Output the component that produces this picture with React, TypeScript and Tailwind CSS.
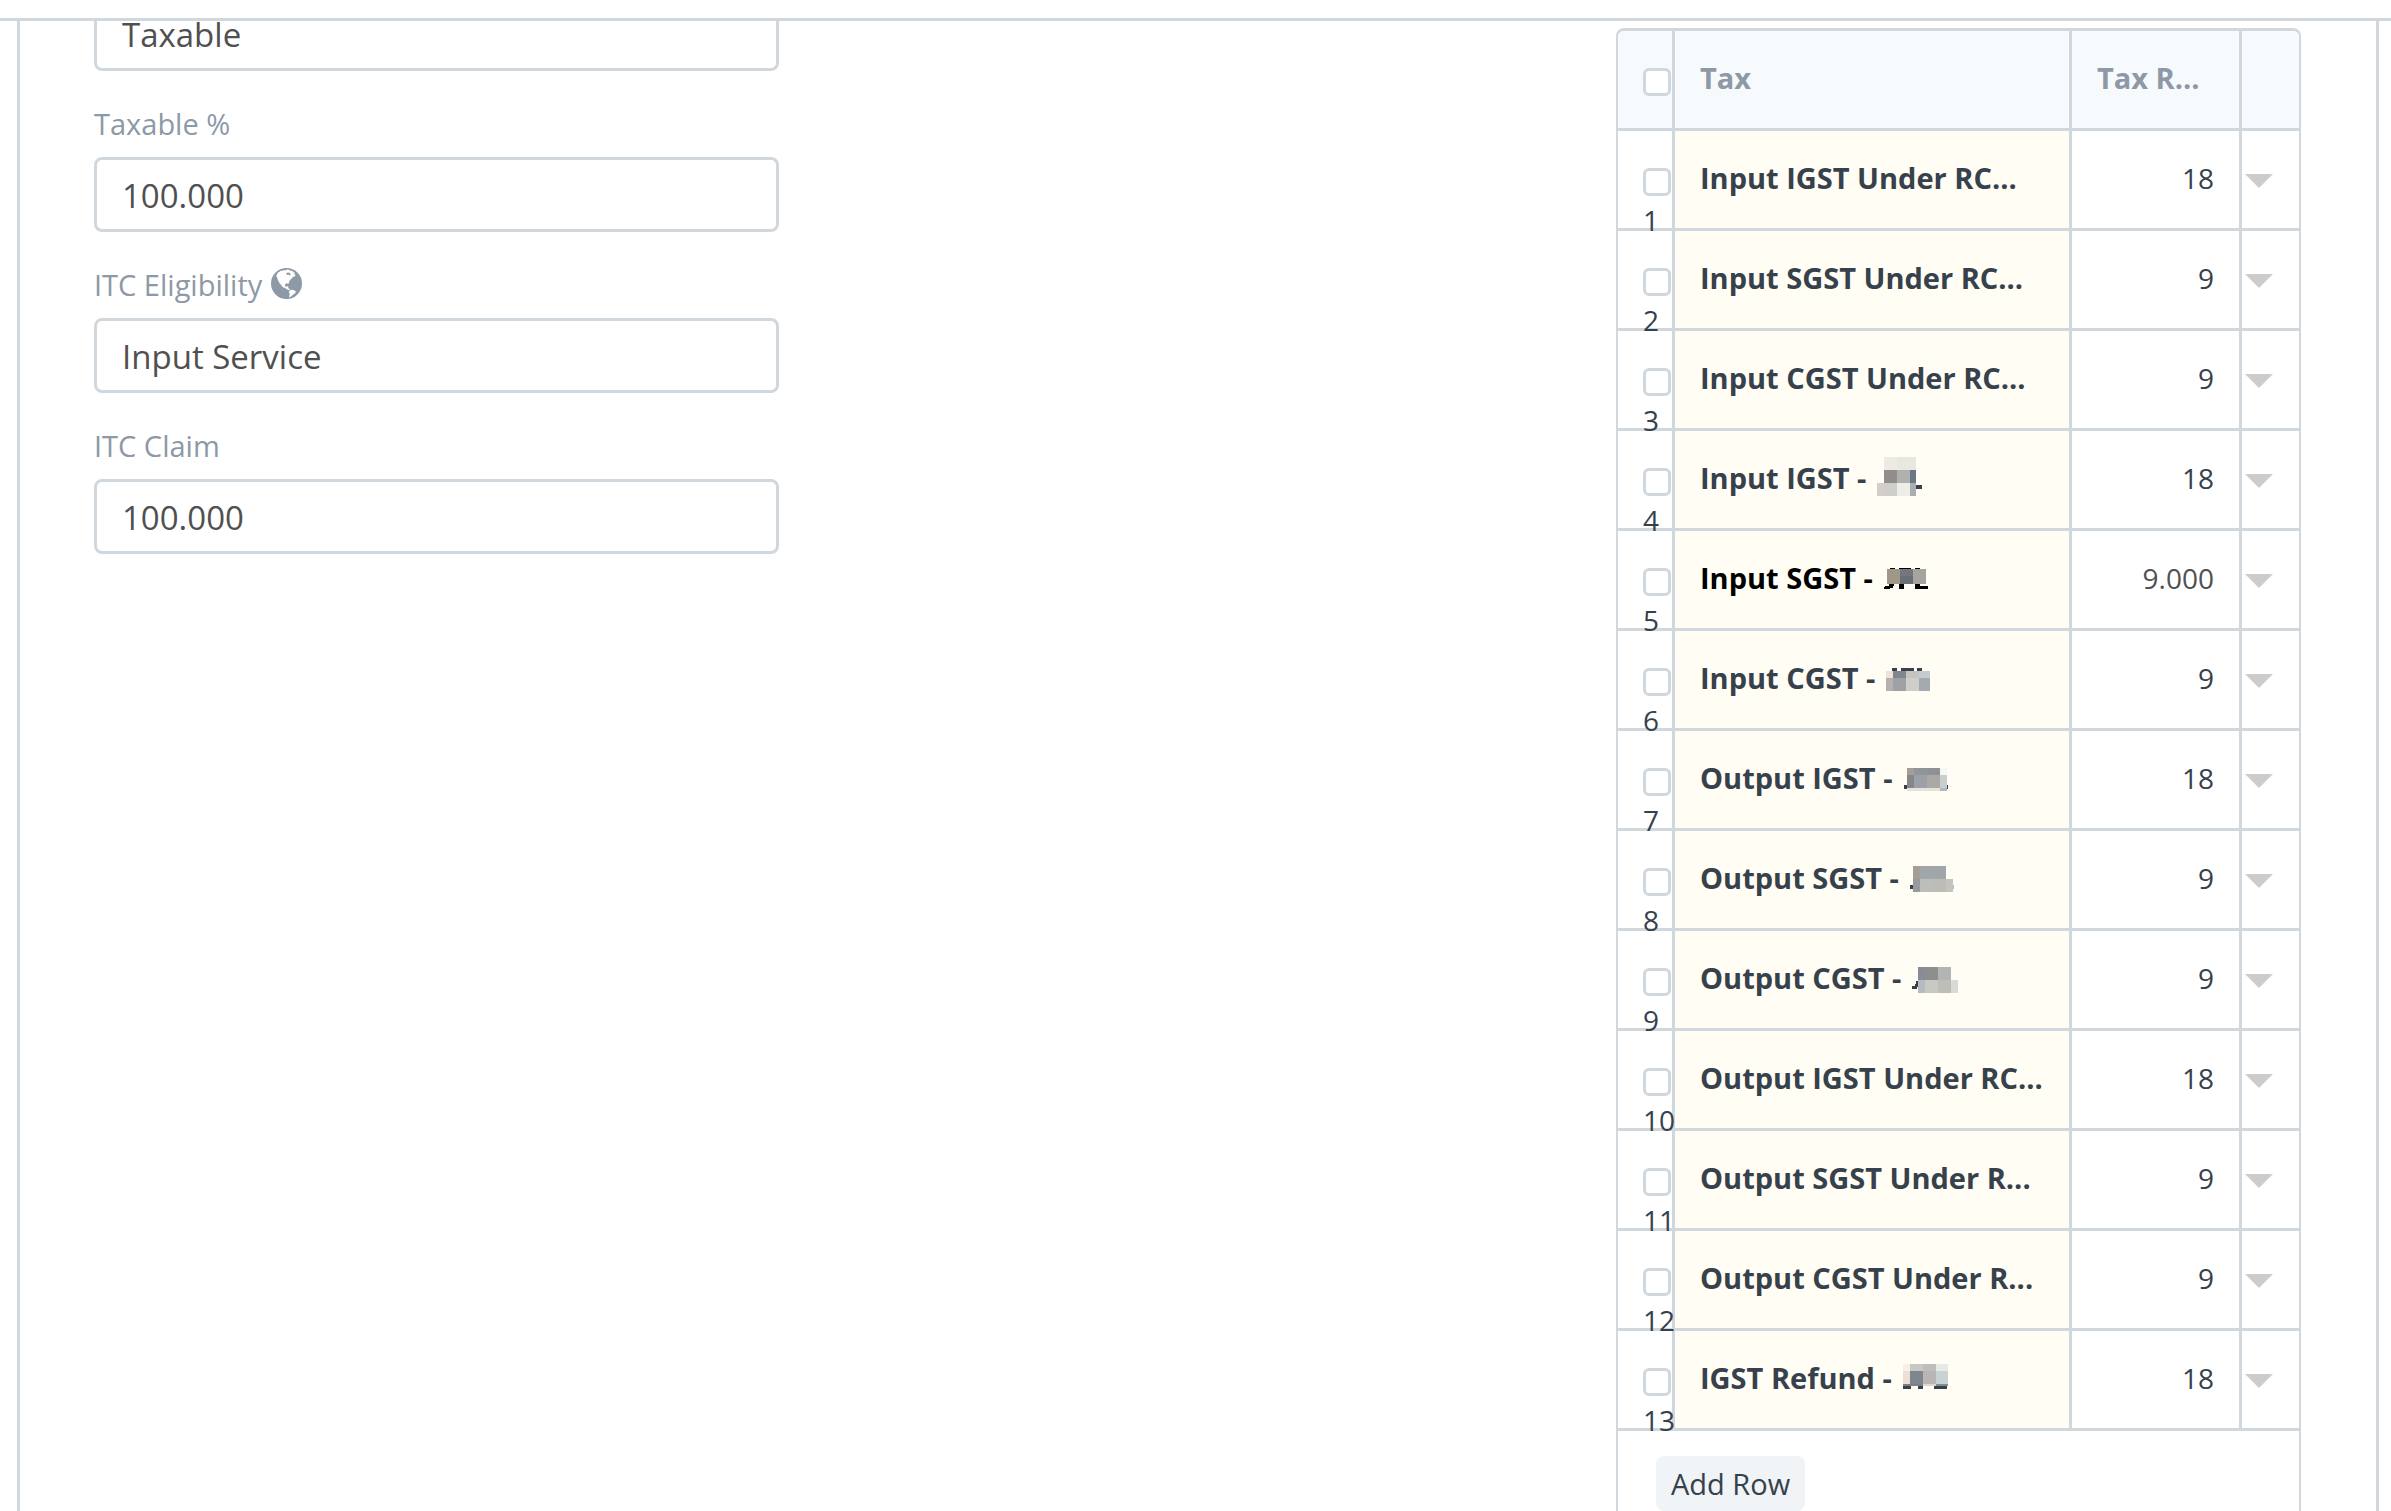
import { useId } from "react";

type Block = [x: number, y: number, w: number, h: number, fill: string];

type TaxRow = {
  tax: string;
  rate: string;
  mask?: Block[];
  editing?: boolean;
};

const INK = "#36414c";

const ROWS: TaxRow[] = [
  { tax: "Input IGST Under RC...", rate: "18" },
  { tax: "Input SGST Under RC...", rate: "9" },
  { tax: "Input CGST Under RC...", rate: "9" },
  {
    tax: "Input IGST -",
    rate: "18",
    mask: [
      [7, 0, 13, 13, "#eeebe5"],
      [20, 0, 13, 13, "#e8e7e0"],
      [33, 0, 6, 13, "#e7e8e2"],
      [7, 13, 13, 13, "#928d8d"],
      [20, 13, 13, 13, "#afb1b1"],
      [33, 13, 6, 13, "#6a7788"],
      [0, 26, 7, 13, "#d3cec9"],
      [7, 26, 13, 13, "#cfcfc9"],
      [20, 26, 13, 13, "#eeeee8"],
      [33, 26, 6, 13, "#abaeaf"],
      [39, 28, 6, 4, INK],
    ],
  },
  {
    tax: "Input SGST -",
    rate: "9.000",
    editing: true,
    mask: [
      [6, 11, 5, 1, "#000"],
      [15, 11, 12, 1, "#000"],
      [31, 11, 5, 1, "#000"],
      [3, 12, 13, 15, "#a09887"],
      [16, 12, 13, 7, "#74777d"],
      [16, 19, 13, 8, "#6a6f74"],
      [29, 12, 13, 15, "#a5a49f"],
      [5, 27, 5, 2, "#000"],
      [1, 29, 8, 2, "#000"],
      [0, 30, 6, 2, "#000"],
      [15, 27, 5, 5, "#000"],
      [31, 27, 5, 5, "#000"],
      [36, 29, 8, 3, "#000"],
    ],
  },
  {
    tax: "Input CGST -",
    rate: "9",
    mask: [
      [6, 11, 5, 3, INK],
      [15, 11, 13, 3, INK],
      [31, 11, 5, 3, INK],
      [0, 14, 7, 7, "#efe2d6"],
      [7, 14, 13, 7, "#7f868d"],
      [20, 14, 13, 7, "#c5c4bf"],
      [33, 14, 11, 7, "#c6cccd"],
      [0, 21, 7, 13, "#b8b0ae"],
      [7, 21, 13, 13, "#9fa2a5"],
      [20, 21, 13, 13, "#cfcec9"],
      [33, 21, 11, 13, "#a4abae"],
    ],
  },
  {
    tax: "Output IGST -",
    rate: "18",
    mask: [
      [0, 28, 3, 4, INK],
      [3, 11, 7, 7, "#a59e97"],
      [10, 11, 13, 7, "#8f959a"],
      [23, 11, 13, 7, "#8f9194"],
      [36, 11, 7, 7, "#f3faf5"],
      [3, 18, 7, 13, "#878787"],
      [10, 18, 13, 13, "#9ba1a7"],
      [23, 18, 13, 13, "#aba8a6"],
      [36, 18, 7, 13, "#c9cfcc"],
      [3, 31, 33, 3, "#e6e3df"],
      [36, 31, 7, 3, "#b5b7b4"],
      [43, 28, 1, 4, "#2a3a80"],
    ],
  },
  {
    tax: "Output SGST -",
    rate: "9",
    mask: [
      [0, 28, 3, 4, INK],
      [3, 9, 7, 13, "#a49d96"],
      [10, 9, 26, 13, "#a1a6a9"],
      [3, 22, 7, 13, "#989a9d"],
      [10, 22, 13, 13, "#bcbebc"],
      [23, 22, 13, 13, "#bdbdb8"],
      [36, 22, 7, 13, "#c4c3c0"],
      [43, 28, 1, 4, "#8fc7f0"],
    ],
  },
  {
    tax: "Output CGST -",
    rate: "9",
    mask: [
      [4, 24, 2, 3, INK],
      [3, 27, 3, 3, INK],
      [0, 29, 5, 3, INK],
      [6, 10, 7, 13, "#888c96"],
      [13, 10, 13, 13, "#8d8f8e"],
      [26, 10, 13, 13, "#b1b5b6"],
      [6, 23, 7, 13, "#b6bbc1"],
      [13, 23, 13, 13, "#c8c9c4"],
      [26, 23, 13, 13, "#bebeb9"],
      [39, 23, 7, 13, "#d9dad6"],
    ],
  },
  { tax: "Output IGST Under RC...", rate: "18" },
  { tax: "Output SGST Under R...", rate: "9" },
  { tax: "Output CGST Under R...", rate: "9" },
  {
    tax: "IGST Refund -",
    rate: "18",
    mask: [
      [0, 7, 7, 7, "#f7f0e8"],
      [7, 7, 13, 7, "#c6c8c4"],
      [20, 7, 13, 7, "#bebebd"],
      [33, 7, 12, 7, "#e6e9e6"],
      [0, 14, 7, 13, "#ecdfd5"],
      [7, 14, 13, 13, "#7f868e"],
      [20, 14, 13, 13, "#b8b5b4"],
      [33, 14, 12, 13, "#c9d2d2"],
      [0, 27, 20, 2, "#7d7f83"],
      [20, 27, 13, 2, "#dbd9d3"],
      [33, 27, 12, 2, "#848c93"],
      [0, 29, 8, 3, INK],
      [15, 29, 5, 3, INK],
      [31, 29, 13, 3, INK],
    ],
  },
];

function GlobeIcon() {
  return (
    <svg viewBox="0 1 14 14" className="mb-[5px] size-[31px] shrink-0" fill="currentColor" aria-hidden="true">
      <path
        fillRule="evenodd"
        d="M7 1a7 7 0 1 0 0 14a7 7 0 1 0 0-14zM3.1 3.1L4.3 2.3L5.2 2.2L5.9 1.9L6.6 2.1L7.1 1.7L8.2 1.8L8.9 2.3L9.6 2.2L10.2 2.9L10.8 3.2L10.5 3.9L11.2 4.2L10.5 4.9L9.9 4.9L9.5 5.6L8.8 6.2L8.3 6.9L8.1 7.9L7.6 8.1L7.1 7.9L6.4 8.3L6.3 9.2L7 9.5L7.5 9.1L7.9 9.3L7.7 10L8.5 10.5L8.3 11L7.3 10.7L6.3 10L5.2 9.6L4.6 8.7L3.9 7.9L3.2 6.7L2.8 5.4L2.4 4.5zM8.5 11.1L9.3 10.8L10.2 10.9L11.2 11.5L11 12.3L10.2 12.8L9.3 13.6L8.4 14.3L8.2 13.6L8.5 12.7L8 11.9zM7.5 3L6.8 3.5L7.3 4.2L7.9 3.9L8.4 4.4L8.9 3.9L8.4 3.2z"
      />
    </svg>
  );
}

function Field({ label, value, globe = false }: { label?: string; value: string; globe?: boolean }) {
  const id = useId();
  return (
    <div>
      {label && (
        <label htmlFor={id} className="flex h-[86px] items-end gap-[9px] pb-[14px] text-[29px] leading-[38px] text-[#8d99a6]">
          {label}
          {globe && <GlobeIcon />}
        </label>
      )}
      <input
        id={id}
        type="text"
        defaultValue={value}
        aria-label={label ? undefined : "Taxability"}
        className="block h-[75px] w-full rounded-lg border-[3px] border-[#d1d8dd] bg-white px-[25px] pt-0.5 text-[33px] text-[#505050]"
      />
    </div>
  );
}

function Tick({ label }: { label: string }) {
  return (
    <input
      type="checkbox"
      aria-label={label}
      className="block size-[28px] shrink-0 appearance-none rounded-md border-[3px] border-[#d1d8dd] bg-white"
    />
  );
}

function Mask({ blocks }: { blocks: Block[] }) {
  return (
    <svg width="46" height="45" viewBox="0 0 46 45" shapeRendering="crispEdges" className="shrink-0" aria-hidden="true">
      {blocks.map(([x, y, w, h, fill], i) => (
        <rect key={i} x={x} y={y} width={w} height={h} fill={fill} />
      ))}
    </svg>
  );
}

function TaxTable() {
  return (
    <div className="rounded-t-lg border-x-2 border-t-[3px] border-[#d1d8dd]">
      <table className="w-full table-fixed border-separate border-spacing-0 text-[28px] leading-[38px] whitespace-nowrap">
        <colgroup>
          <col className="w-[57px]" />
          <col />
          <col className="w-[170px]" />
          <col className="w-[57px]" />
        </colgroup>
        <thead>
          <tr className="bg-[#f7fafc] text-left text-[29px] text-[#8d99a6]">
            <th className="rounded-tl-md border-r-[3px] border-b-[3px] border-[#d1d8dd] p-0">
              <div className="h-[97px] pt-[37px] pl-[25px]">
                <Tick label="Select all rows" />
              </div>
            </th>
            <th className="border-r-[3px] border-b-[3px] border-[#d1d8dd] px-[25px] pt-0 pb-1 font-bold">Tax</th>
            <th className="border-r-[3px] border-b-[3px] border-[#d1d8dd] px-[25px] pt-0 pb-1 font-bold">Tax R...</th>
            <th className="rounded-tr-md border-b-[3px] border-[#d1d8dd] p-0" aria-label="Actions" />
          </tr>
        </thead>
        <tbody>
          {ROWS.map((row, i) => (
            <tr key={row.tax}>
              <td className="border-r-[3px] border-b-[3px] border-[#d1d8dd] p-0">
                <div className="flex h-[97px] flex-col gap-[5px] pt-[37px] pl-[25px]">
                  <Tick label={`Select row ${i + 1}`} />
                  <span className="relative z-10">{i + 1}</span>
                </div>
              </td>
              <td className="border-r-[3px] border-b-[3px] border-[#d1d8dd] bg-[#fffdf4] p-0">
                <div
                  className={`flex h-[97px] items-center gap-[11px] pl-[25px] text-[29px] font-bold ${row.editing ? "text-black" : ""}`}
                >
                  <span className="pb-1">{row.tax}</span>
                  {row.mask && <Mask blocks={row.mask} />}
                </div>
              </td>
              <td
                className={`border-r-[3px] border-b-[3px] border-[#d1d8dd] px-[25px] pt-0 pb-1 text-right ${row.editing ? "text-[#505050]" : ""}`}
              >
                {row.rate}
              </td>
              <td className="border-b-[3px] border-[#d1d8dd] p-0">
                <button type="button" aria-label={`Open row ${i + 1}`} className="flex h-[97px] items-center pt-[3px] pl-[3px]">
                  <svg width="28" height="14" viewBox="0 0 28 14" aria-hidden="true">
                    <path d="M0 0h28L14 14z" fill="#ccc" />
                  </svg>
                </button>
              </td>
            </tr>
          ))}
        </tbody>
      </table>
      <div className="px-[38px] pt-[25px] pb-6">
        <button type="button" className="h-[55px] rounded-lg bg-[#f0f4f7] px-[15px] text-[29px]">
          Add Row
        </button>
      </div>
    </div>
  );
}

export default function App() {
  return (
    <div className="flex h-screen flex-col overflow-hidden bg-white font-['Open_Sans',sans-serif] text-[#36414c]">
      <header className="h-[21px] shrink-0 border-b-[3px] border-[#d1d8dd]" />
      <main className="mr-[12px] ml-[17px] min-h-0 flex-1 overflow-hidden border-x-[3px] border-[#d1d8dd]">
        <div className="grid grid-cols-3 gap-[76px] pr-[75px] pl-[74px]">
          <form className="-mt-[25px]">
            <Field value="Taxable" />
            <Field label="Taxable %" value="100.000" />
            <Field label="ITC Eligibility" value="Input Service" globe />
            <Field label="ITC Claim" value="100.000" />
          </form>
          <div className="col-start-3 pt-[7px]">
            <TaxTable />
          </div>
        </div>
      </main>
    </div>
  );
}
